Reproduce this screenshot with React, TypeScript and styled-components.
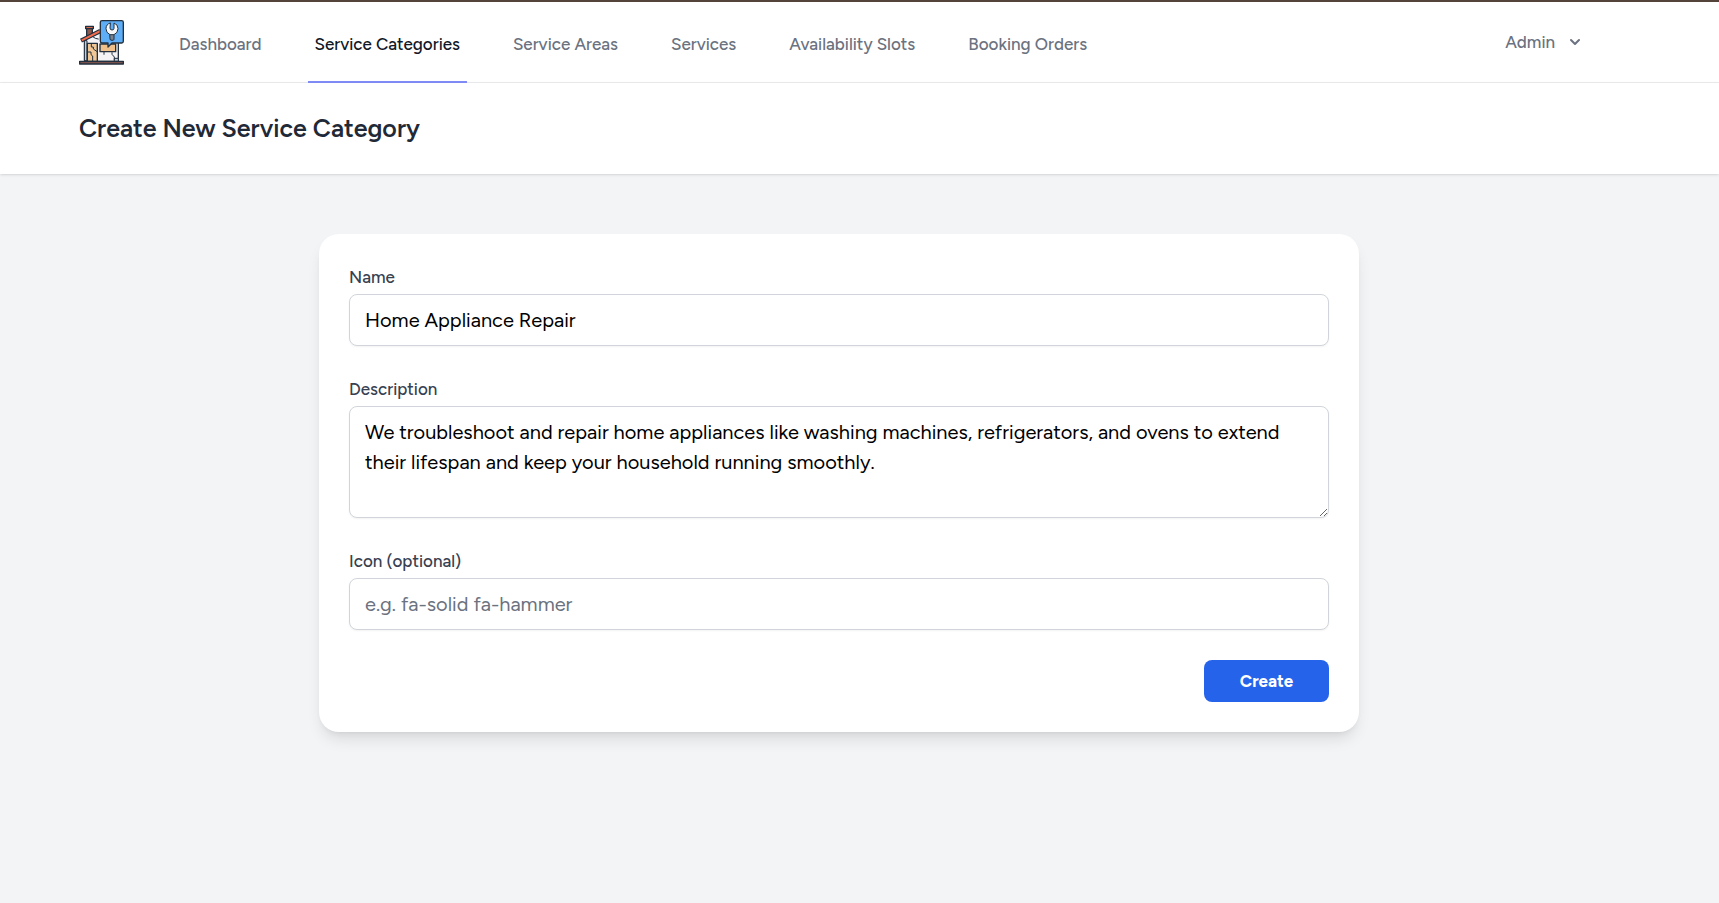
import React, { useState } from 'react';
import styled, { createGlobalStyle } from 'styled-components';

const GlobalStyle = createGlobalStyle`
  *, *::before, *::after { box-sizing: border-box; }
  body {
    margin: 0;
    background: #f3f4f6;
    color: #000;
    font-family: Figtree, 'Open Sans', sans-serif;
    font-size: 20px;
    line-height: 30px;
  }
  button, input, textarea { font: inherit; color: inherit; }
`;

const Page = styled.div`
  min-height: 100vh;
  border-top: 2px solid #54433a;
`;

const Gutter = styled.div`
  padding-right: 41px;
`;

const Container = styled.div`
  max-width: 1600px;
  margin: 0 auto;
  padding: 0 40px;
`;

const TopBar = styled.div`
  background: #fff;
  border-bottom: 1px solid #ebecee;
`;

const TopBarRow = styled(Container)`
  display: flex;
  justify-content: space-between;
  height: 80px;
`;

const Brand = styled.a`
  display: flex;
  align-items: center;
  margin-right: 48px;

  svg { display: block; }
`;

const NavGroup = styled.div`
  display: flex;
`;

const Nav = styled.nav`
  display: flex;
  gap: 39px;
  margin-bottom: -1px;
`;

const NavLink = styled.a<{ $active?: boolean }>`
  display: flex;
  align-items: center;
  padding: 5px 7px 0;
  border-bottom: 2px solid ${(p) => (p.$active ? '#818cf8' : 'transparent')};
  color: ${(p) => (p.$active ? '#111827' : '#6b7280')};
  font-size: 17px;
  line-height: 25px;
  font-weight: 500;
  text-decoration: none;
  white-space: nowrap;
`;

const UserArea = styled.div`
  display: flex;
  align-items: center;
`;

const UserButton = styled.button`
  display: flex;
  align-items: center;
  gap: 10px;
  padding: 0 14px;
  border: 0;
  background: #fff;
  color: #6b7280;
  font-size: 17px;
  line-height: 25px;
  font-weight: 500;
  cursor: pointer;
`;

const PageHeader = styled.header`
  position: relative;
  background: #fff;
  box-shadow: 0 1px 3px rgba(0, 0, 0, 0.1), 0 1px 2px -1px rgba(0, 0, 0, 0.1);
`;

const HeaderRow = styled(Container)`
  padding-top: 30px;
  padding-bottom: 30px;
`;

const Title = styled.h2`
  margin: 0;
  color: #1f2937;
  font-size: 25px;
  line-height: 31px;
  font-weight: 600;
`;

const Main = styled.main`
  padding: 60px 0;
`;

const Card = styled.form`
  display: flex;
  flex-direction: column;
  gap: 30px;
  max-width: 1040px;
  margin: 0 auto;
  padding: 30px;
  border-radius: 20px;
  background: #fff;
  box-shadow: 0 10px 15px -3px rgba(0, 0, 0, 0.1), 0 4px 6px -4px rgba(0, 0, 0, 0.1);
`;

const Field = styled.div`
  display: flex;
  flex-direction: column;
  gap: 3px;
`;

const Label = styled.label`
  color: #374151;
  font-size: 17px;
  line-height: 27px;
  font-weight: 500;
`;

const TextInput = styled.input`
  width: 100%;
  height: 52px;
  padding: 10px 15px;
  border: 1px solid #d1d5db;
  border-radius: 8px;
  background: #fff;
  box-shadow: 0 1px 2px rgba(0, 0, 0, 0.05);

  &::placeholder { color: #6b7280; opacity: 1; }
`;

const TextArea = styled.textarea`
  display: block;
  width: 100%;
  height: 112px;
  padding: 10px 15px;
  border: 1px solid #d1d5db;
  border-radius: 8px;
  background: #fff;
  box-shadow: 0 1px 2px rgba(0, 0, 0, 0.05);
  resize: vertical;
`;

const Actions = styled.div`
  display: flex;
  justify-content: flex-end;
`;

const SubmitButton = styled.button`
  min-width: 125px;
  height: 42px;
  padding: 0 30px;
  border: 0;
  border-radius: 8px;
  background: #2563eb;
  color: #fff;
  font-size: 17px;
  line-height: 25px;
  font-weight: 700;
  cursor: pointer;
`;

const Logo = () => (
  <svg width="45" height="45" viewBox="0 0 135 135" aria-hidden="true">
    <g stroke="#22303f" strokeWidth="4" strokeLinejoin="round" strokeLinecap="round">
      <path d="M17 60 64 36h54v88H17z" fill="#f4f4f6" />
      <path d="M17 62h7v60h-7z" fill="#c3cedb" strokeWidth="3" />
      <path d="M23 25h17v20l-17 9z" fill="#8b5a4c" />
      <path d="M20 19h23v7H20z" fill="#d9694d" />
      <path d="M25 70h30v54H25z" fill="#f0c795" />
      <path d="M37 72v9h6v6l10 7M28 96h8v8l5 4v14" fill="none" strokeWidth="3" />
      <path d="M43 51l6 4 9 2" fill="none" strokeWidth="3" />
      <path d="M63 72h47v23H63z" fill="#f0c08a" />
      <path d="M75 97v6M99 98v5l7 8v9" fill="none" strokeWidth="3" />
      <path d="M107 115h11v9h-11z" fill="#c3cedb" strokeWidth="3" />
      <path d="M6 62 64 33" fill="none" strokeWidth="13" strokeLinecap="butt" />
      <path d="M8 61 64 33" fill="none" stroke="#ee6c4d" strokeWidth="6" strokeLinecap="butt" />
      <path d="M2 124h131v8H2z" fill="#79504a" />
      <path d="M69 2h59q5 0 5 5v57q0 5-5 5H99L87 81V69H69q-5 0-5-5V7q0-5 5-5z" fill="#5dadf7" />
      <path d="M93 39h12v19q0 3-6 3t-6-3z" fill="#78818d" strokeWidth="3" />
      <path
        d="M93 9q-12 4-12 17 0 13 12 18h12q12-5 12-18 0-13-12-17v16q0 5-6 5t-6-5z"
        fill="#f7f8fa"
        strokeWidth="3"
      />
    </g>
  </svg>
);

const ChevronIcon = () => (
  <svg width="20" height="20" viewBox="0 0 20 20" fill="currentColor" aria-hidden="true">
    <path
      fillRule="evenodd"
      clipRule="evenodd"
      d="M5.293 7.293a1 1 0 011.414 0L10 10.586l3.293-3.293a1 1 0 111.414 1.414l-4 4a1 1 0 01-1.414 0l-4-4a1 1 0 010-1.414z"
    />
  </svg>
);

const links = [
  'Dashboard',
  'Service Categories',
  'Service Areas',
  'Services',
  'Availability Slots',
  'Booking Orders',
];

export default function App() {
  const [name, setName] = useState('Home Appliance Repair');
  const [description, setDescription] = useState(
    'We troubleshoot and repair home appliances like washing machines, refrigerators, and ovens to extend their lifespan and keep your household running smoothly.',
  );
  const [icon, setIcon] = useState('');

  return (
    <Page>
      <GlobalStyle />
      <TopBar>
        <Gutter>
          <TopBarRow>
            <NavGroup>
              <Brand href="#" aria-label="Home">
                <Logo />
              </Brand>
              <Nav>
                {links.map((text) => (
                  <NavLink key={text} href="#" $active={text === 'Service Categories'}>
                    {text}
                  </NavLink>
                ))}
              </Nav>
            </NavGroup>
            <UserArea>
              <UserButton type="button">
                Admin
                <ChevronIcon />
              </UserButton>
            </UserArea>
          </TopBarRow>
        </Gutter>
      </TopBar>
      <PageHeader>
        <Gutter>
          <HeaderRow>
            <Title>Create New Service Category</Title>
          </HeaderRow>
        </Gutter>
      </PageHeader>
      <Main>
        <Gutter>
          <Card onSubmit={(e) => e.preventDefault()}>
            <Field>
              <Label htmlFor="name">Name</Label>
              <TextInput id="name" value={name} onChange={(e) => setName(e.target.value)} />
            </Field>
            <Field>
              <Label htmlFor="description">Description</Label>
              <TextArea
                id="description"
                rows={3}
                value={description}
                onChange={(e) => setDescription(e.target.value)}
              />
            </Field>
            <Field>
              <Label htmlFor="icon">Icon (optional)</Label>
              <TextInput
                id="icon"
                placeholder="e.g. fa-solid fa-hammer"
                value={icon}
                onChange={(e) => setIcon(e.target.value)}
              />
            </Field>
            <Actions>
              <SubmitButton type="submit">Create</SubmitButton>
            </Actions>
          </Card>
        </Gutter>
      </Main>
    </Page>
  );
}
